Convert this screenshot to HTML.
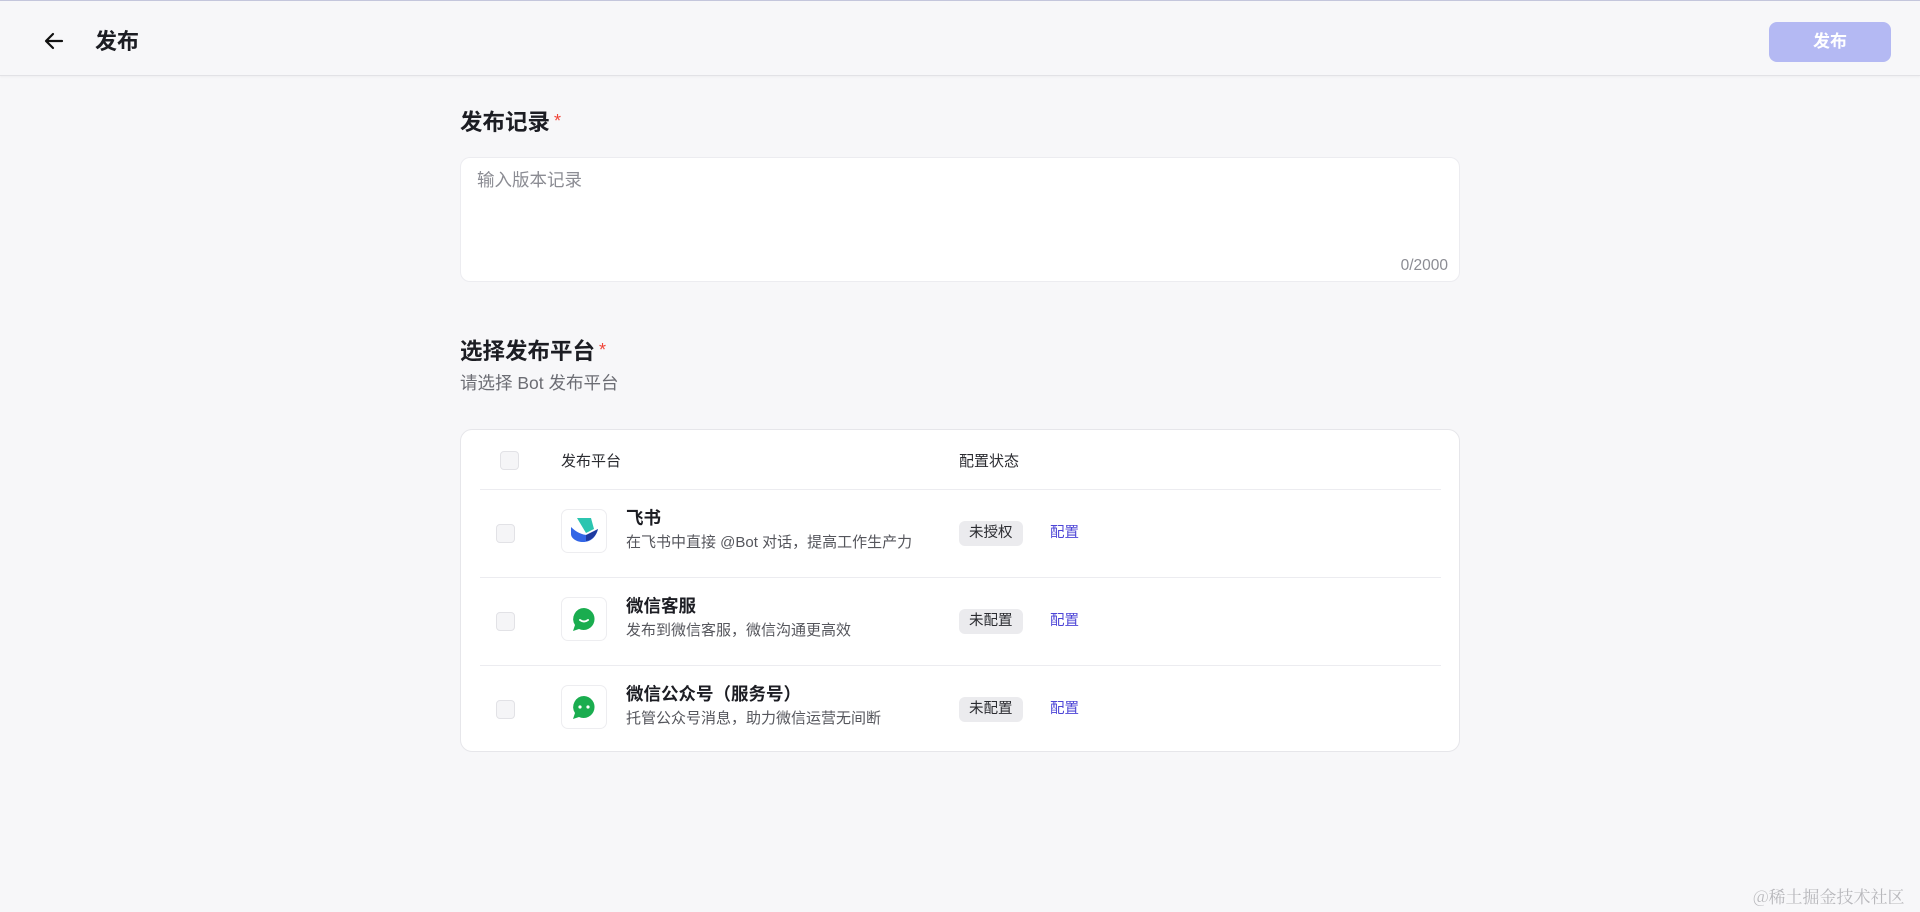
<!DOCTYPE html>
<html><head><meta charset="utf-8"><style>
*{box-sizing:border-box;margin:0;padding:0}
body{width:1920px;height:912px;background:#f7f7f9;font-family:"Liberation Sans","Noto Sans CJK SC",sans-serif;color:#1c1d23;position:relative;overflow:hidden}
.top{position:absolute;left:0;top:0;width:1920px;height:1px;background:#c5c6dc}
.hdr{position:absolute;left:0;top:1px;width:1920px;height:75px;border-bottom:1px solid #e2e2e6;box-shadow:0 1px 2px rgba(0,0,0,.04)}
.ttl{position:absolute;left:95px;top:26px;font-size:22px;font-weight:bold;line-height:30px}
.btn{position:absolute;left:1769px;top:21px;width:122px;height:40px;background:#b4b9f3;border-radius:8px;color:#fff;font-weight:bold;font-size:17px;text-align:center;line-height:40px}
.h2{position:absolute;left:460px;font-size:22.5px;font-weight:bold;line-height:30px}
.h2 span{color:#f04438;font-weight:normal;font-size:18px;vertical-align:3px;margin-left:4px}
.ta{position:absolute;left:460px;top:157px;width:1000px;height:125px;background:#fff;border:1px solid #ececf0;border-radius:10px}
.ph{position:absolute;left:16px;top:9px;font-size:17.5px;color:#8b8c93}
.cnt{position:absolute;right:11px;bottom:6px;font-size:15.5px;color:#8b8c93}
.sub{position:absolute;left:460px;top:370px;font-size:17.5px;color:#6c6d74}
.card{position:absolute;left:460px;top:429px;width:1000px;height:323px;background:#fff;border:1px solid #e6e6ea;border-radius:12px}
.cb{position:absolute;width:19px;height:19px;border:1px solid #e2e2e6;border-radius:4px;background:#f5f5f7}
.th{position:absolute;font-size:15px;color:#2a2b30;top:20px}
.row{position:absolute;left:19px;width:961px;height:88px;border-top:1px solid #ececf0}
.ic{position:absolute;left:81px;top:19px;width:46px;height:44px;border:1px solid #ededf0;border-radius:7px;background:#fff}
.nm{position:absolute;left:146px;top:17px;font-size:17.5px;font-weight:bold;line-height:22px}
.ds{position:absolute;left:146px;top:43px;font-size:15px;color:#55565c;line-height:20px}
.tag{position:absolute;left:479px;top:31px;height:25px;padding:0 10px;background:#ebebee;border-radius:6px;font-size:14.5px;line-height:25px;color:#2a2b30}
.lk{position:absolute;left:570px;top:33px;font-size:14.5px;color:#4d45d6;line-height:20px}
.wm{position:absolute;left:1753px;top:883px;font-size:17px;color:#b8b8bc;font-family:"Noto Serif CJK SC",serif}
</style></head><body>
<div class="top"></div>
<div class="hdr">
<svg style="position:absolute;left:43px;top:29px" width="22" height="22" viewBox="0 0 22 22"><path d="M19 11H4M10 4L3 11l7 7" fill="none" stroke="#111" stroke-width="2.2" stroke-linecap="round" stroke-linejoin="round"/></svg>
<div class="ttl">发布</div>
<div class="btn">发布</div>
</div>
<div class="h2" style="top:106px">发布记录<span>*</span></div>
<div class="ta"><div class="ph">输入版本记录</div><div class="cnt">0/2000</div></div>
<div class="h2" style="top:335px">选择发布平台<span>*</span></div>
<div class="sub">请选择 Bot 发布平台</div>
<div class="card">
<div class="cb" style="left:39px;top:21px"></div>
<div class="th" style="left:100px">发布平台</div>
<div class="th" style="left:498px">配置状态</div>
<div class="row" style="top:59px">
<div class="cb" style="left:16px;top:34px"></div>
<div class="ic"><svg width="44" height="42" viewBox="0 0 44 42"><path d="M15 8h14l3 11-8 4z" fill="#2cc5b0"/><path d="M9 17c5 5 11 8 17 8l10-6c-2 8-7 13-15 13-7 0-12-4-12-8z" fill="#3366e6"/><path d="M24 25l12-6c-2 7-6 11-12 12z" fill="#1e3aa0"/></svg></div>
<div class="nm">飞书</div><div class="ds">在飞书中直接 @Bot 对话，提高工作生产力</div>
<div class="tag">未授权</div><div class="lk">配置</div></div>
<div class="row" style="top:147px">
<div class="cb" style="left:16px;top:34px"></div>
<div class="ic"><svg width="44" height="42" viewBox="0 0 44 42"><path d="M22 10a11 11 0 1 1-5 21l-6 2 2-6a11 11 0 0 1 9-17z" fill="#1aad4f"/><path d="M18 22q4 3 8 0" stroke="#fff" stroke-width="2" fill="none" stroke-linecap="round"/></svg></div>
<div class="nm">微信客服</div><div class="ds">发布到微信客服，微信沟通更高效</div>
<div class="tag">未配置</div><div class="lk">配置</div></div>
<div class="row" style="top:235px">
<div class="cb" style="left:16px;top:34px"></div>
<div class="ic"><svg width="44" height="42" viewBox="0 0 44 42"><path d="M22 10a11 11 0 1 1-5 21l-6 2 2-6a11 11 0 0 1 9-17z" fill="#1aad4f"/><circle cx="18" cy="21" r="1.6" fill="#fff"/><circle cx="26" cy="21" r="1.6" fill="#fff"/></svg></div>
<div class="nm">微信公众号（服务号）</div><div class="ds">托管公众号消息，助力微信运营无间断</div>
<div class="tag">未配置</div><div class="lk">配置</div></div>
</div>
<div class="wm">@稀土掘金技术社区</div>
</body></html>
